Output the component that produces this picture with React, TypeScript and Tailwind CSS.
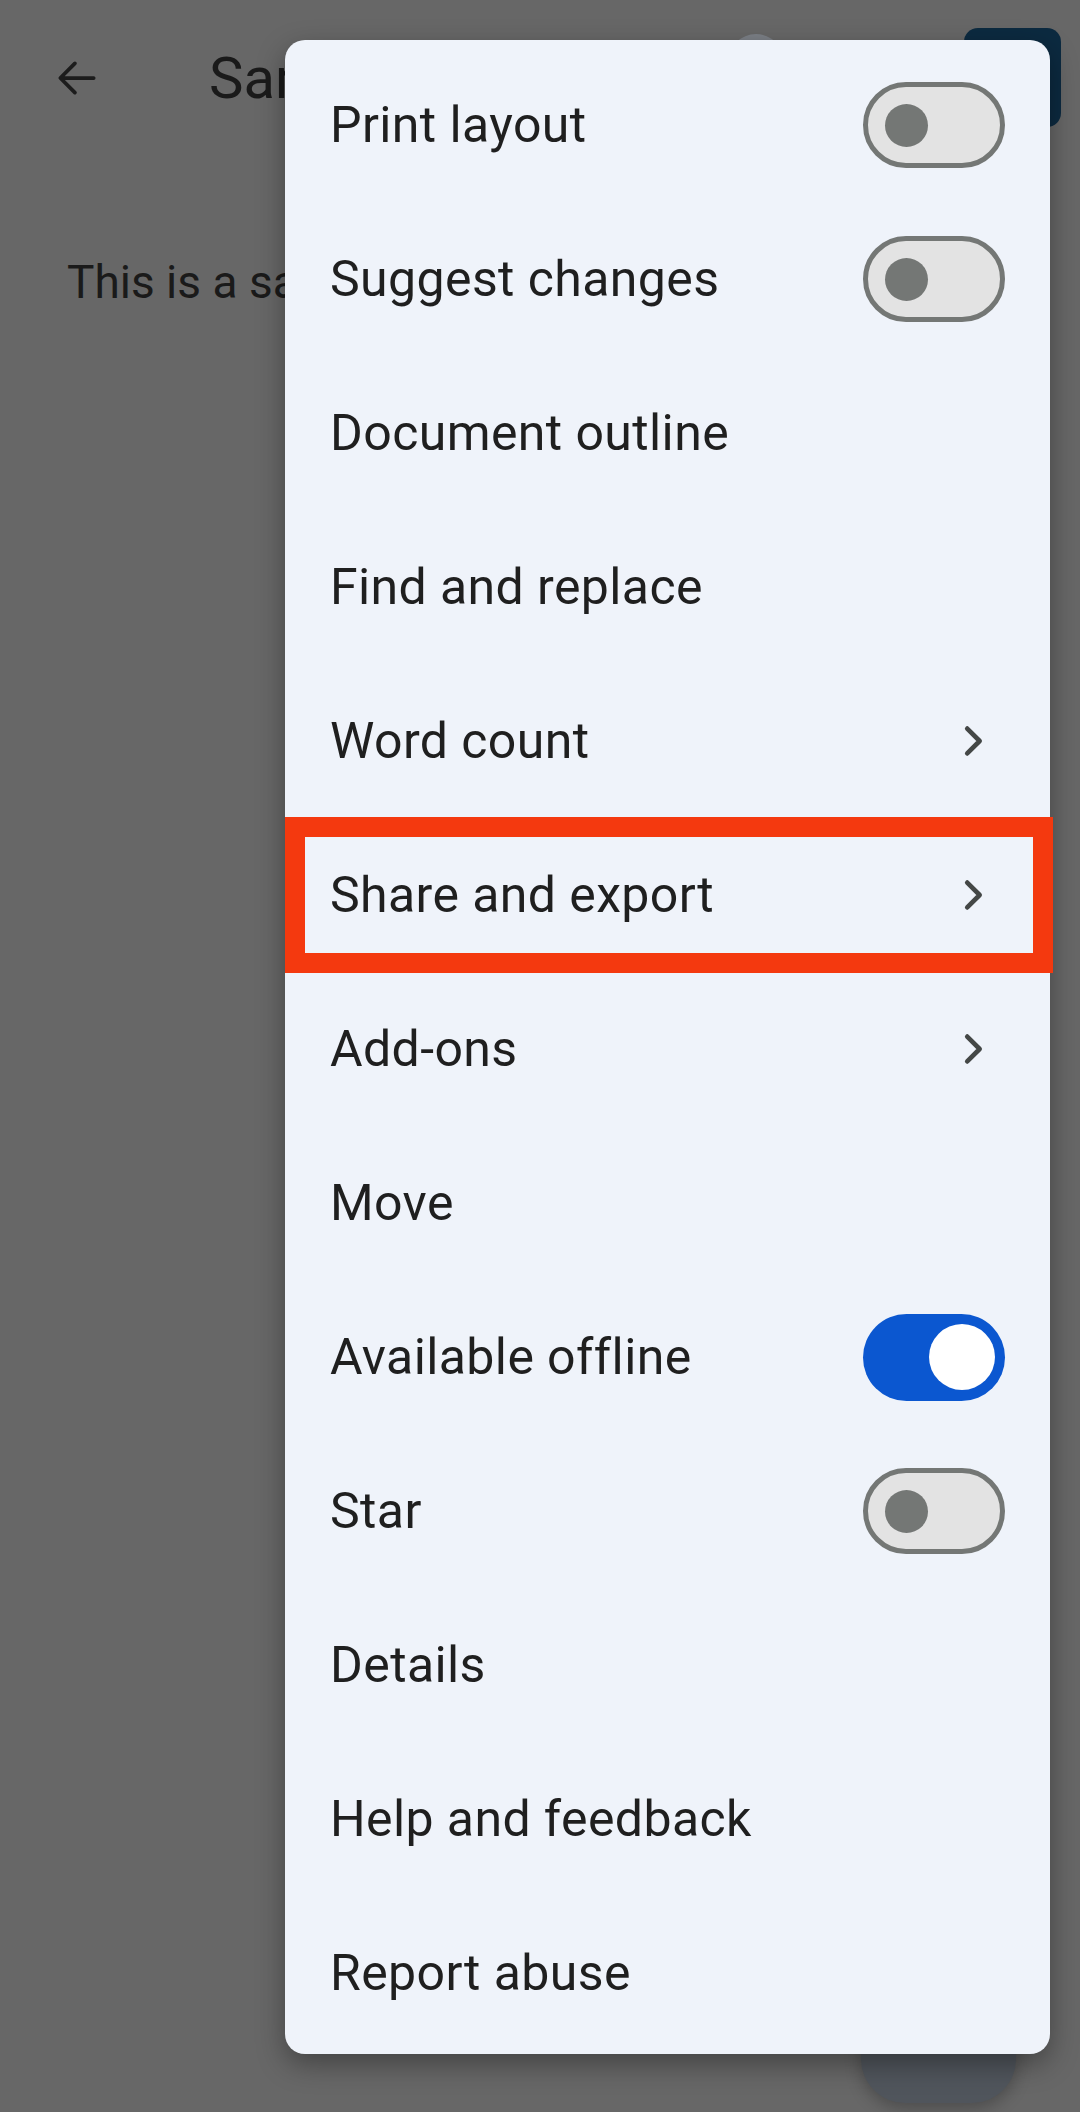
import type { ReactNode } from "react"

type Item = {
  label: string
  trailing?: "off" | "on" | "chevron"
  highlight?: boolean
}

const items: Item[] = [
  { label: "Print layout", trailing: "off" },
  { label: "Suggest changes", trailing: "off" },
  { label: "Document outline" },
  { label: "Find and replace" },
  { label: "Word count", trailing: "chevron" },
  { label: "Share and export", trailing: "chevron", highlight: true },
  { label: "Add-ons", trailing: "chevron" },
  { label: "Move" },
  { label: "Available offline", trailing: "on" },
  { label: "Star", trailing: "off" },
  { label: "Details" },
  { label: "Help and feedback" },
  { label: "Report abuse" },
]

const Toggle = ({ on }: { on: boolean }) =>
  on ? (
    <div className="flex h-[87px] w-[142px] items-center justify-end rounded-full bg-[#0b57d0] pr-[10px]">
      <div className="h-[66px] w-[66px] rounded-full bg-white" />
    </div>
  ) : (
    <div className="flex h-[86px] w-[142px] items-center rounded-full border-[5px] border-[#747775] bg-[#e3e3e3] pl-[17px]">
      <div className="h-[43px] w-[43px] rounded-full bg-[#747775]" />
    </div>
  )

const Chevron = () => (
  <div className="flex w-[142px] justify-end pr-[10px]">
    <svg width="46" height="46" viewBox="0 0 24 24" fill="none">
      <path
        d="M9.5 5.5l6.5 6.5-6.5 6.5"
        stroke="#444746"
        strokeWidth="2.4"
        strokeLinecap="round"
        strokeLinejoin="round"
      />
    </svg>
  </div>
)

const Row = ({ item }: { item: Item }) => {
  let trailing: ReactNode = null
  if (item.trailing === "off") trailing = <Toggle on={false} />
  if (item.trailing === "on") trailing = <Toggle on />
  if (item.trailing === "chevron") trailing = <Chevron />

  return (
    <div className="relative flex h-[154px] items-center justify-between px-[45px]">
      <span className="text-[50px] leading-none tracking-[0.4px] text-[#1f1f1f]">{item.label}</span>
      {trailing}
      {/* red annotation box */}
      {item.highlight && (
        <div className="absolute inset-y-[-1px] left-0 right-[-3px] border-[20px] border-[#f4390f]" />
      )}
    </div>
  )
}

export default function App() {
  return (
    <div
      className="relative h-[2112px] w-[1080px] overflow-hidden bg-[#676767]"
      style={{ fontFamily: "Roboto, 'Noto Sans', sans-serif" }}
    >
      {/* Dimmed document behind the menu */}
      <div className="flex h-[156px] items-center">
        <div className="ml-[52px] flex h-[50px] w-[50px] shrink-0 items-center justify-center">
          <svg width="52" height="52" viewBox="0 0 24 24" fill="none">
            <path
              d="M20 12H5m6-7l-7 7 7 7"
              stroke="#1c1c1c"
              strokeWidth="1.8"
              strokeLinecap="round"
              strokeLinejoin="round"
            />
          </svg>
        </div>
        {/* clipped where the menu covers it */}
        <div className="ml-[107px] w-[76px] overflow-hidden whitespace-nowrap">
          <span className="text-[58px] text-[#1a1a1a]">Sample document</span>
        </div>
        <div className="flex-1" />
        <div className="mr-[180px] mt-[34px] h-[56px] w-[56px] self-start rounded-full bg-[#7b7f86]" />
        <div className="mr-[19px] mt-[28px] h-[99px] w-[97px] self-start rounded-[14px] bg-[#0c2a40]" />
      </div>
      <div className="mt-[92px] w-[285px] overflow-hidden whitespace-nowrap pl-[67px]">
        <span className="text-[46px] text-[#1a1a1a]">This is a sample document.</span>
      </div>

      {/* FAB */}
      <div className="absolute bottom-[9px] right-[64px] h-[160px] w-[155px] rounded-[44px] bg-[#50555c] shadow-[0_6px_16px_rgba(0,0,0,0.25)]" />

      {/* Overflow menu */}
      <div className="absolute left-[285px] top-[40px] w-[765px] rounded-[20px] bg-[#eff3fa] pb-[4px] pt-[8px] shadow-[0_10px_28px_rgba(0,0,0,0.35)]">
        {items.map((item) => (
          <Row key={item.label} item={item} />
        ))}
      </div>
    </div>
  )
}
